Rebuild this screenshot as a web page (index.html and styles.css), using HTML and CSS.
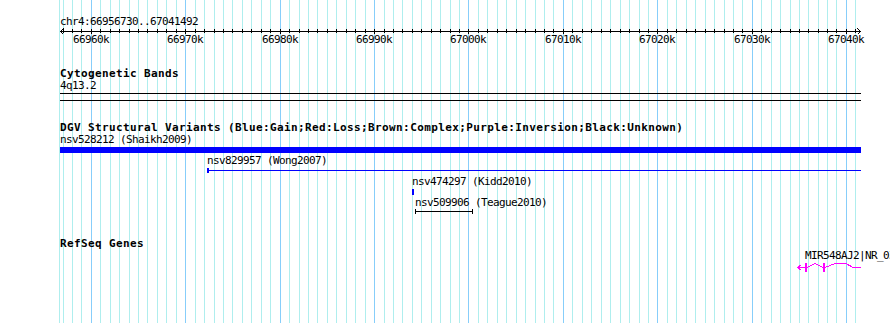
FILE: index.html
```html
<!DOCTYPE html>
<html lang="en">
  <head>
    <meta charset="UTF-8" />
    <meta name="viewport" content="width=device-width, initial-scale=1.0" />
    <title>chr4:66956730..67041492</title>
    <link rel="stylesheet" href="styles.css">
  </head>
  <body>
    <div class="panel">
      <!-- background grid, one line per kb -->
      <svg class="grid" width="890" height="323" shape-rendering="crispEdges">
        <path class="grid-minor" d="M59.5 0V323M63.5 0V323M72.5 0V323M81.5 0V323M100.5 0V323M110.5 0V323M119.5 0V323M129.5 0V323M138.5 0V323M147.5 0V323M157.5 0V323M166.5 0V323M176.5 0V323M195.5 0V323M204.5 0V323M214.5 0V323M223.5 0V323M232.5 0V323M242.5 0V323M251.5 0V323M261.5 0V323M270.5 0V323M289.5 0V323M299.5 0V323M308.5 0V323M317.5 0V323M327.5 0V323M336.5 0V323M346.5 0V323M355.5 0V323M365.5 0V323M384.5 0V323M393.5 0V323M402.5 0V323M412.5 0V323M421.5 0V323M431.5 0V323M440.5 0V323M450.5 0V323M459.5 0V323M478.5 0V323M487.5 0V323M497.5 0V323M506.5 0V323M516.5 0V323M525.5 0V323M535.5 0V323M544.5 0V323M553.5 0V323M572.5 0V323M582.5 0V323M591.5 0V323M601.5 0V323M610.5 0V323M620.5 0V323M629.5 0V323M639.5 0V323M648.5 0V323M667.5 0V323M676.5 0V323M686.5 0V323M695.5 0V323M705.5 0V323M714.5 0V323M724.5 0V323M733.5 0V323M742.5 0V323M761.5 0V323M771.5 0V323M780.5 0V323M790.5 0V323M799.5 0V323M808.5 0V323M818.5 0V323M827.5 0V323M836.5 0V323M855.5 0V323"/>
        <path class="grid-major" d="M91.5 0V323M185.5 0V323M280.5 0V323M374.5 0V323M468.5 0V323M563.5 0V323M657.5 0V323M752.5 0V323M846.5 0V323"/>
      </svg>

      <div class="tracks">
        <div class="ruler-title">chr4:66956730..67041492</div>
        <svg class="ruler" width="801" height="6" shape-rendering="crispEdges">
          <path d="M0 3.5H801"/>
          <path d="M3.5 0.5L0.5 3.5L3.5 6.5M797.5 0.5L800.5 3.5L797.5 6.5"/>
          <path d="M3.5 1v4M12.5 1v4M21.5 1v4M40.5 1v4M50.5 1v4M59.5 1v4M69.5 1v4M78.5 1v4M87.5 1v4M97.5 1v4M106.5 1v4M116.5 1v4M135.5 1v4M144.5 1v4M154.5 1v4M163.5 1v4M172.5 1v4M182.5 1v4M191.5 1v4M201.5 1v4M210.5 1v4M229.5 1v4M239.5 1v4M248.5 1v4M257.5 1v4M267.5 1v4M276.5 1v4M286.5 1v4M295.5 1v4M305.5 1v4M324.5 1v4M333.5 1v4M342.5 1v4M352.5 1v4M361.5 1v4M371.5 1v4M380.5 1v4M390.5 1v4M399.5 1v4M418.5 1v4M427.5 1v4M437.5 1v4M446.5 1v4M456.5 1v4M465.5 1v4M475.5 1v4M484.5 1v4M493.5 1v4M512.5 1v4M522.5 1v4M531.5 1v4M541.5 1v4M550.5 1v4M560.5 1v4M569.5 1v4M579.5 1v4M588.5 1v4M607.5 1v4M616.5 1v4M626.5 1v4M635.5 1v4M645.5 1v4M654.5 1v4M664.5 1v4M673.5 1v4M682.5 1v4M701.5 1v4M711.5 1v4M720.5 1v4M730.5 1v4M739.5 1v4M748.5 1v4M758.5 1v4M767.5 1v4M776.5 1v4M795.5 1v4"/>
          <path d="M31.5 1v5M125.5 1v5M220.5 1v5M314.5 1v5M408.5 1v5M503.5 1v5M597.5 1v5M692.5 1v5M786.5 1v5"/>
        </svg>
        <div class="ruler-labels">
          <span style="left:31px">66960k</span>
          <span style="left:125px">66970k</span>
          <span style="left:220px">66980k</span>
          <span style="left:314px">66990k</span>
          <span style="left:408px">67000k</span>
          <span style="left:503px">67010k</span>
          <span style="left:597px">67020k</span>
          <span style="left:692px">67030k</span>
          <span style="left:786px">67040k</span>
        </div>

        <div class="track cyto">
          <div class="track-title">Cytogenetic Bands</div>
          <div class="feature-label">4q13.2</div>
          <svg class="band" width="801" height="10" shape-rendering="crispEdges">
            <path d="M0 1.5H801M0 8.5H801"/>
          </svg>
        </div>

        <div class="track dgv">
          <div class="track-title">DGV Structural Variants (Blue:Gain;Red:Loss;Brown:Complex;Purple:Inversion;Black:Unknown)</div>
          <div class="feature-label">nsv528212 (Shaikh2009)</div>
          <svg class="gain-thick" width="801" height="6">
            <rect x="0" y="0" width="801" height="6"/>
          </svg>
          <div class="feature-label gap" style="padding-left:147px">nsv829957 (Wong2007)</div>
          <svg class="gain-thin" width="801" height="7">
            <rect x="147" y="1" width="2" height="5"/>
            <rect x="147" y="3" width="654" height="1"/>
          </svg>
          <div class="feature-label gap" style="padding-left:352px">nsv474297 (Kidd2010)</div>
          <svg class="gain-small" width="801" height="6">
            <rect x="352" y="0" width="2" height="6"/>
          </svg>
          <div class="feature-label gap" style="padding-left:355px">nsv509906 (Teague2010)</div>
          <svg class="unknown" width="801" height="6">
            <rect x="355" y="0" width="1" height="5"/>
            <rect x="412" y="0" width="1" height="5"/>
            <rect x="355" y="2" width="58" height="1"/>
          </svg>
        </div>

        <div class="track refseq">
          <div class="track-title">RefSeq Genes</div>
          <div class="feature-label" style="padding-left:745px">MIR548AJ2|NR_039604</div>
          <svg class="gene" width="801" height="12" shape-rendering="crispEdges">
            <path d="M737 5.5H745M741.5 2.5L737.5 5.5L741.5 8.5"/>
            <path d="M747 5.5L755 1.5L763 5.5M765 5.5L775 1.5H786L793 5.5H801"/>
            <rect x="745" y="1" width="2" height="9"/>
            <rect x="763" y="1" width="2" height="9"/>
          </svg>
        </div>
      </div>
    </div>
  </body>
</html>
```

FILE: styles.css
```css
body {
  margin: 0;
  padding: 0;
  background-color: #fff;
  color: #000;
  font-family: "DejaVu Sans Mono", "Liberation Mono", monospace;
  font-size: 11px;
  line-height: 12px;
  letter-spacing: -0.62px;
}

.panel {
  position: relative;
  width: 890px;
  height: 323px;
  overflow: hidden;
  background-color: #fff;
}

.grid {
  position: absolute;
  top: 0;
  left: 0;
}

.grid-minor {
  stroke: #afeeee;
  stroke-width: 1;
}

.grid-major {
  stroke: #87cefa;
  stroke-width: 1;
}

.tracks {
  position: relative;
  padding: 16px 0 0 60px;
}

.tracks svg {
  display: block;
  overflow: visible;
}

.ruler-title {
  height: 12px;
}

.ruler path {
  stroke: #000;
  stroke-width: 1;
  fill: none;
}

.ruler-labels {
  position: relative;
  width: 801px;
  height: 12px;
}

.ruler-labels span {
  position: absolute;
  top: 0;
  transform: translateX(-50%);
  white-space: nowrap;
}

.track-title {
  font-weight: bold;
  letter-spacing: 0.38px;
  height: 12px;
  white-space: nowrap;
}

.feature-label {
  height: 12px;
  white-space: nowrap;
}

.feature-label.gap {
  margin-top: 2px;
}

.cyto {
  margin-top: 22px;
}

.band path {
  stroke: #000;
  stroke-width: 1;
}

.dgv {
  margin-top: 20px;
}

.gain-thick,
.gain-small {
  margin-top: 1px;
}

.gain-thick rect,
.gain-thin rect,
.gain-small rect {
  fill: #00f;
}

.unknown rect {
  fill: #000;
}

.refseq {
  margin-top: 23px;
}

.gene path {
  stroke: #f0f;
  stroke-width: 1;
  fill: none;
}

.gene rect {
  fill: #f0f;
}
```
